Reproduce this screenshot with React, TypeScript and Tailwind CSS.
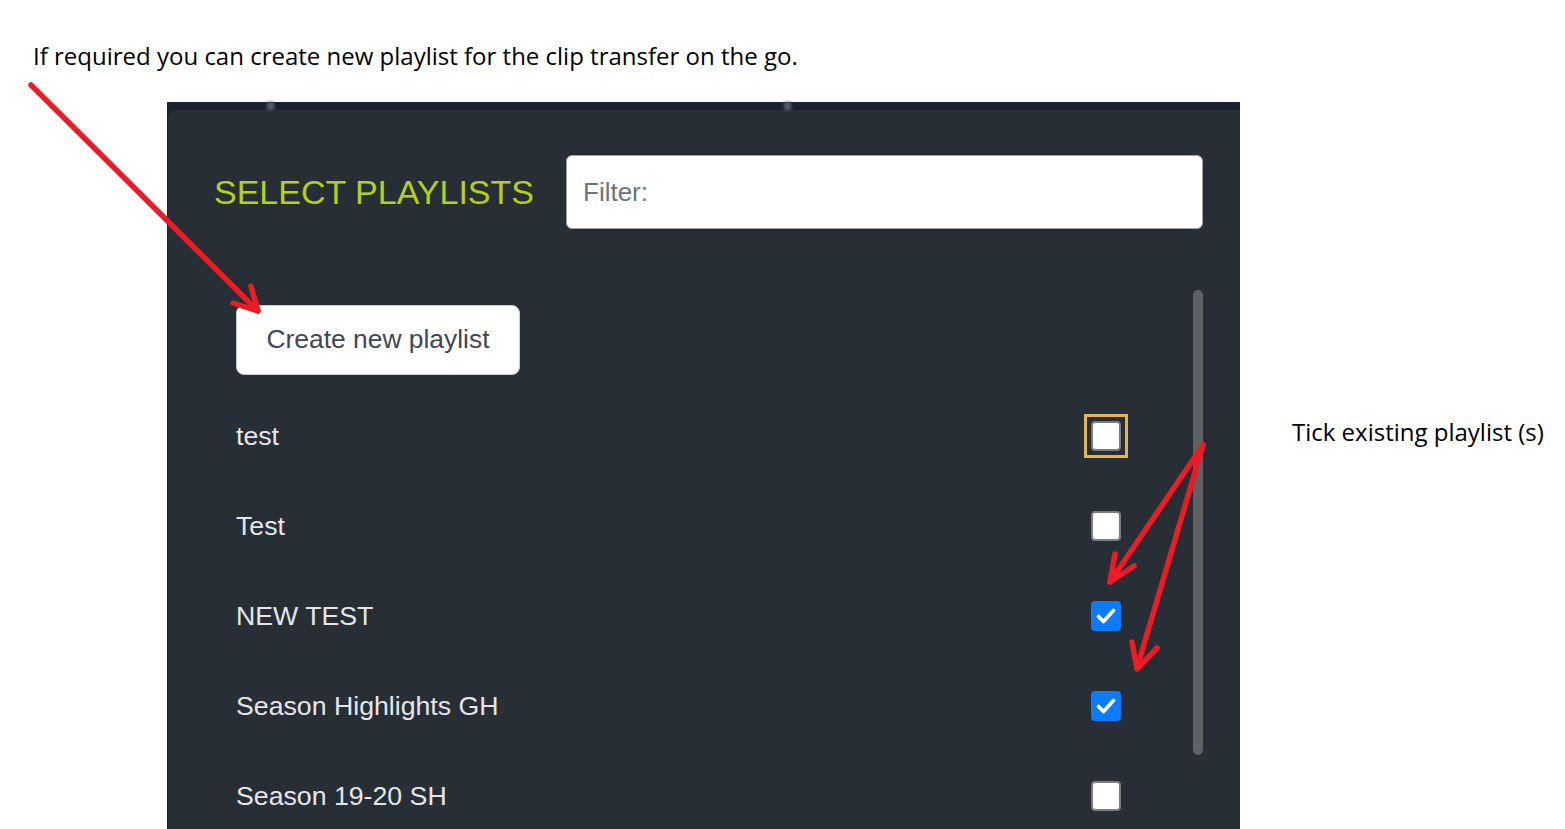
import { useState } from "react";

type Playlist = {
  name: string;
  checked: boolean;
  focused?: boolean;
};

const initialPlaylists: Playlist[] = [
  { name: "test", checked: false, focused: true },
  { name: "Test", checked: false },
  { name: "NEW TEST", checked: true },
  { name: "Season Highlights GH", checked: true },
  { name: "Season 19-20 SH", checked: false },
];

function Checkbox({ checked, onToggle }: { checked: boolean; onToggle: () => void }) {
  return (
    <button
      type="button"
      onClick={onToggle}
      className={[
        "flex h-[30px] w-[30px] items-center justify-center rounded-[4px]",
        checked ? "bg-[#0b7bff]" : "border-2 border-[#7a7c80] bg-white",
      ].join(" ")}
    >
      {checked && (
        <svg width="30" height="30" viewBox="0 0 30 30">
          <polyline
            points="7.5,15.5 12.5,20.5 22.5,9.5"
            fill="none"
            stroke="white"
            strokeWidth="3.6"
            strokeLinecap="round"
            strokeLinejoin="round"
          />
        </svg>
      )}
    </button>
  );
}

export default function App() {
  const [items, setItems] = useState(initialPlaylists);
  const [filter, setFilter] = useState("");

  const toggle = (i: number) =>
    setItems((prev) => prev.map((p, j) => (j === i ? { ...p, checked: !p.checked } : p)));

  return (
    <div className="relative h-[829px] w-[1565px] overflow-hidden bg-white">
      {/* annotation line */}
      <p
        className="ml-[33px] mt-[40px] text-[24px] leading-[32px] text-black"
        style={{ fontFamily: '"Open Sans", sans-serif' }}
      >
        If required you can create new playlist for the clip transfer on the go.
      </p>

      <div className="mt-[30px] flex pl-[167px]">
        {/* dialog panel */}
        <div className="relative h-[740px] w-[1073px] bg-[#1c2131] pt-[8px]" style={{ fontFamily: '"Liberation Sans", Arial, sans-serif' }}>
          <div className="absolute left-[100px] top-0 h-[8px] w-[7px] bg-[#555b6d] blur-[1.5px]" />
          <div className="absolute left-[617px] top-0 h-[8px] w-[7px] bg-[#555b6d] blur-[1.5px]" />

          <div className="ml-[1px] h-full rounded-tl-[8px] bg-[#272e36]">
            {/* header */}
            <div className="flex items-center pl-[46px] pr-[37px] pt-[45px]">
              <h2 className="text-[34px] leading-none text-[#b2d313]">SELECT PLAYLISTS</h2>
              <input
                value={filter}
                onChange={(e) => setFilter(e.target.value)}
                placeholder="Filter:"
                className="ml-[32px] h-[74px] flex-1 rounded-[6px] border border-[#9ca0a6] bg-white px-[16px] text-[26px] text-[#333] outline-none placeholder:text-[#6c737d]"
              />
            </div>

            {/* list */}
            <div className="mt-[61px] flex pl-[68px] pr-[37px]">
              <div className="flex-1 pr-[72px]">
                <button className="mt-[15px] h-[70px] w-[284px] rounded-[8px] border border-[#c8cbd0] bg-white text-[26.4px] text-[#3f4654]">
                  Create new playlist
                </button>
                <div className="mt-[16px]">
                  {items
                    .filter((p) => p.name.toLowerCase().includes(filter.toLowerCase()))
                    .map((p, i) => (
                      <div key={p.name} className="flex h-[90px] items-center justify-between">
                        <span className="text-[26.7px] text-[#e4e6e9]">{p.name}</span>
                        {p.focused ? (
                          <span className="-m-[7px] flex border-[3px] border-[#e3b552] p-[4px]">
                            <Checkbox checked={p.checked} onToggle={() => toggle(i)} />
                          </span>
                        ) : (
                          <Checkbox checked={p.checked} onToggle={() => toggle(i)} />
                        )}
                      </div>
                    ))}
                </div>
              </div>
              <div className="h-[465px] w-[10px] rounded-full bg-[#5f6165]" />
            </div>
          </div>
        </div>

        <p
          className="ml-[52px] mt-[314px] whitespace-nowrap text-[24px] leading-[32px] text-black"
          style={{ fontFamily: '"Open Sans", sans-serif' }}
        >
          Tick existing playlist (s)
        </p>
      </div>

      {/* red annotation arrows */}
      <svg className="pointer-events-none absolute left-0 top-0" width="1565" height="829">
        <g fill="none" stroke="#ec1c24" strokeWidth="5.5" strokeLinecap="round" strokeLinejoin="round">
          <line x1="31" y1="85" x2="258" y2="311" />
          <polyline points="233,303 258,311 251,286" />
          <line x1="1203" y1="445" x2="1110" y2="582" />
          <polyline points="1115,554 1110,582 1134,566" />
          <line x1="1203" y1="445" x2="1137" y2="668" />
          <polyline points="1132,642 1137,669 1157,648" />
        </g>
      </svg>
    </div>
  );
}
